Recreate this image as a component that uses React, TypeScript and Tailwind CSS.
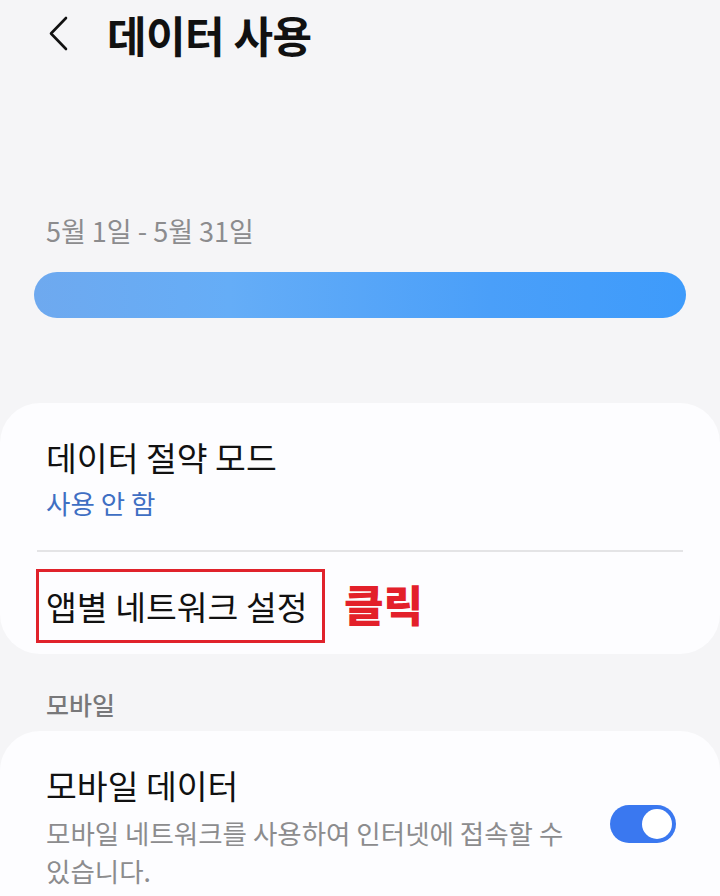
import React from "react";

const font = { fontFamily: '"Noto Sans CJK KR", "Noto Sans", sans-serif' };

function BackIcon() {
  return (
    <svg width="22" height="36" viewBox="0 0 22 36" fill="none">
      <path d="M19 2 L4 17.5 L19 33" stroke="#111" strokeWidth="2.6" strokeLinecap="round" strokeLinejoin="round" />
    </svg>
  );
}

function Toggle({ on }: { on: boolean }) {
  return (
    <div className={`flex h-[38px] w-[66px] shrink-0 items-center rounded-full p-[4px] ${on ? "justify-end bg-[#3a78f0]" : "justify-start bg-[#c9c9cc]"}`}>
      <div className="h-[30px] w-[30px] rounded-full bg-white" />
    </div>
  );
}

export default function App() {
  return (
    <div className="min-h-[896px] w-[720px] overflow-hidden bg-[#f5f5f7]" style={font}>
      {/* Header */}
      <div className="flex h-[68px] items-center pl-[47px]">
        <BackIcon />
        <h1 className="ml-[38px] text-[43px] font-bold leading-none tracking-[-0.5px] text-[#111]">데이터 사용</h1>
      </div>

      {/* Usage period */}
      <div className="mt-[145px] pl-[46px] text-[27px] leading-[36px] text-[#8c8c8e]">5월 1일 - 5월 31일</div>
      <div className="mx-[34px] mt-[23px] h-[46px] rounded-full bg-[linear-gradient(to_right,#6ea9ef,#65adf7_30%,#4a9ff9_70%,#3e9bfb)]" />

      {/* Card 1 */}
      <div className="mt-[85px] rounded-[40px] bg-[#fdfdff] pt-[34px] pb-[11px]">
        <div className="px-[46px]">
          <div className="text-[33.5px] leading-[40px] text-[#111]">데이터 절약 모드</div>
          <div className="mt-[8px] text-[26.5px] leading-[36px] text-[#3f6fc3]">사용 안 함</div>
        </div>
        <div className="mx-[37px] mt-[29px] h-[2px] bg-[#e4e4e6]" />
        <div className="mt-[17px] flex items-center pl-[36px]">
          <div className="flex h-[74px] w-[289px] items-center border-[3px] border-[#e0222b] pl-[7px]">
            <span className="whitespace-nowrap text-[33.5px] leading-[40px] text-[#111]">앱별 네트워크 설정</span>
          </div>
          <span className="ml-[19px] -mt-[6px] text-[43px] font-black leading-none text-[#e3202a]">클릭</span>
        </div>
      </div>

      {/* Section header */}
      <div className="mt-[35px] pl-[46px] text-[25px] font-medium leading-[30px] text-[#78787a]">모바일</div>

      {/* Card 2 */}
      <div className="mt-[12px] rounded-t-[40px] bg-[#fdfdff] pt-[33px] pb-[30px]">
        <div className="flex items-center pl-[46px] pr-[44px]">
          <div className="w-[540px]">
            <div className="text-[33.5px] leading-[42px] text-[#111]">모바일 데이터</div>
            <div className="mt-[8px] break-keep text-[26.5px] leading-[38px] text-[#8c8c8e]">
              모바일 네트워크를 사용하여 인터넷에 접속할 수 있습니다.
            </div>
          </div>
          <div className="ml-auto -mt-[6px]">
            <Toggle on />
          </div>
        </div>
      </div>
    </div>
  );
}
